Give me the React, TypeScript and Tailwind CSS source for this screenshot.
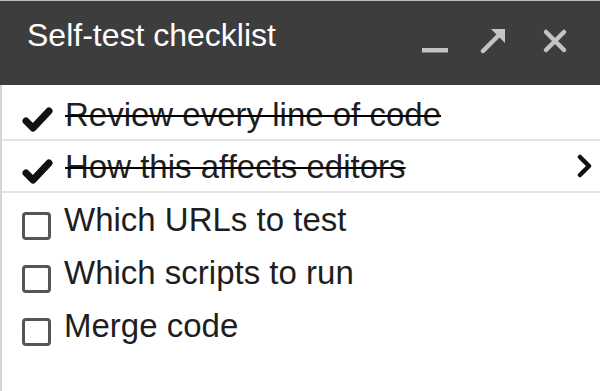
type Item = { label: string; done: boolean; more?: boolean };

const items: Item[] = [
  { label: "Review every line of code", done: true },
  { label: "How this affects editors", done: true, more: true },
  { label: "Which URLs to test", done: false },
  { label: "Which scripts to run", done: false },
  { label: "Merge code", done: false },
];

const CheckMark = () => (
  <svg width="32" height="26" viewBox="0 0 32 26" className="shrink-0 mt-[10px]">
    <path
      d="M5 15 L12 22 L28 5"
      fill="none"
      stroke="#111"
      strokeWidth="7"
      strokeLinecap="round"
      strokeLinejoin="round"
    />
  </svg>
);

const Box = () => (
  <div className="shrink-0 w-[29px] h-[28px] mt-[12px] border-[3px] border-[#555] rounded-[4px] bg-white" />
);

const Chevron = () => (
  <svg width="18" height="24" viewBox="0 0 18 24" className="ml-auto shrink-0">
    <path d="M4 3 L13 12 L4 21" fill="none" stroke="#111" strokeWidth="4.5" strokeLinecap="round" strokeLinejoin="round" />
  </svg>
);

export default function App() {
  return (
    <div className="w-[600px] h-[391px] bg-white overflow-hidden font-['Liberation_Sans',Arial,sans-serif]">
      {/* Header */}
      <div className="h-[85px] bg-[#3d3d3d] border-t border-[#bdbdbd] flex items-start">
        <h1 className="ml-[27px] mt-[18px] text-[32px] leading-none text-white">Self-test checklist</h1>
        <div className="ml-auto mr-[32px] mt-[25px] flex items-start gap-[32px]">
          <svg width="26" height="28" viewBox="0 0 26 28">
            <rect x="0" y="22" width="26" height="4.5" fill="#c4c4c4" />
          </svg>
          <svg width="28" height="28" viewBox="0 0 28 28" className="mr-[2px]">
            <path d="M3 25 L21 7" stroke="#c4c4c4" strokeWidth="4.5" strokeLinecap="round" />
            <path d="M11 3 L25 3 L25 17 Z" fill="#c4c4c4" />
          </svg>
          <svg width="26" height="26" viewBox="0 0 26 26" className="mt-[2px]">
            <path d="M4 4 L22 22 M22 4 L4 22" stroke="#c4c4c4" strokeWidth="4.5" strokeLinecap="round" />
          </svg>
        </div>
      </div>

      {/* List */}
      <div className="h-full border-l-2 border-[#d4d4d4] pt-[4px]">
        {items.map((it) => (
          <div
            key={it.label}
            className={
              it.done
                ? "h-[52px] flex items-center pl-[19px] pr-[6px] border-b-2 border-[#e4e4e4]"
                : "h-[53px] flex items-center pl-[20px] pr-[6px]"
            }
          >
            {it.done ? <CheckMark /> : <Box />}
            <span
              className={
                it.done
                  ? "ml-[12px] text-[33px] leading-none text-[#1e1e1e] line-through decoration-black decoration-[2px]"
                  : "ml-[13px] text-[33px] leading-none text-[#1e1e1e]"
              }
            >
              {it.label}
            </span>
            {it.more && <Chevron />}
          </div>
        ))}
      </div>
    </div>
  );
}
